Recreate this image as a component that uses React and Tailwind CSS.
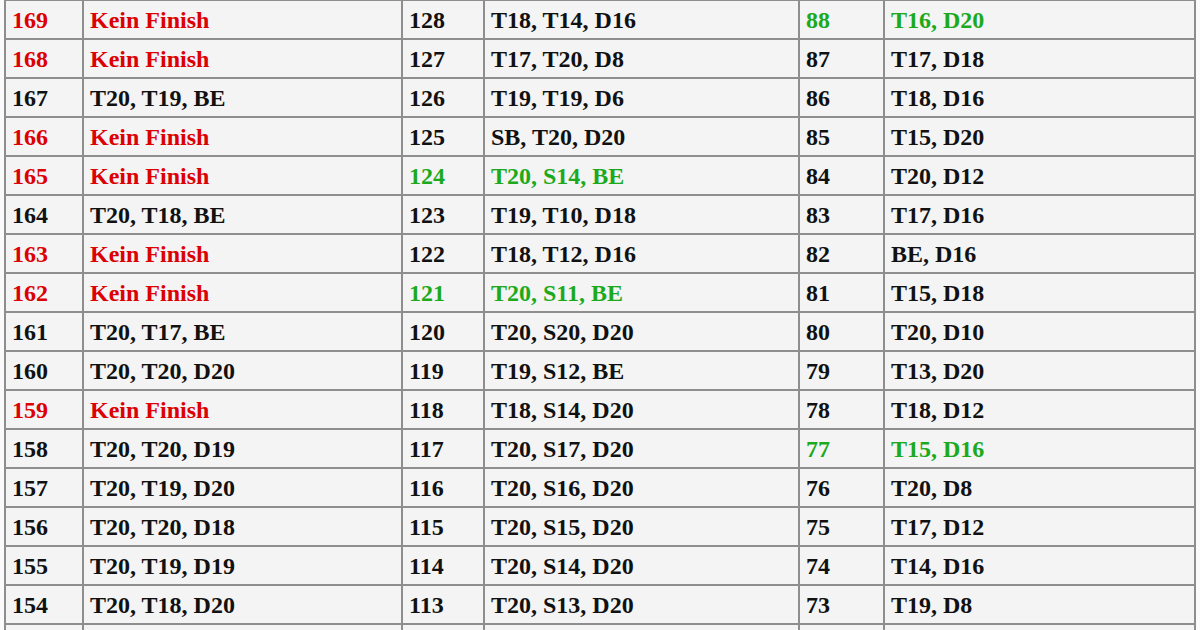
import React from "react";

const R = "r", G = "g";
const rows = [
  [["169", "Kein Finish", R], ["128", "T18, T14, D16"], ["88", "T16, D20", G]],
  [["168", "Kein Finish", R], ["127", "T17, T20, D8"], ["87", "T17, D18"]],
  [["167", "T20, T19, BE"], ["126", "T19, T19, D6"], ["86", "T18, D16"]],
  [["166", "Kein Finish", R], ["125", "SB, T20, D20"], ["85", "T15, D20"]],
  [["165", "Kein Finish", R], ["124", "T20, S14, BE", G], ["84", "T20, D12"]],
  [["164", "T20, T18, BE"], ["123", "T19, T10, D18"], ["83", "T17, D16"]],
  [["163", "Kein Finish", R], ["122", "T18, T12, D16"], ["82", "BE, D16"]],
  [["162", "Kein Finish", R], ["121", "T20, S11, BE", G], ["81", "T15, D18"]],
  [["161", "T20, T17, BE"], ["120", "T20, S20, D20"], ["80", "T20, D10"]],
  [["160", "T20, T20, D20"], ["119", "T19, S12, BE"], ["79", "T13, D20"]],
  [["159", "Kein Finish", R], ["118", "T18, S14, D20"], ["78", "T18, D12"]],
  [["158", "T20, T20, D19"], ["117", "T20, S17, D20"], ["77", "T15, D16", G]],
  [["157", "T20, T19, D20"], ["116", "T20, S16, D20"], ["76", "T20, D8"]],
  [["156", "T20, T20, D18"], ["115", "T20, S15, D20"], ["75", "T17, D12"]],
  [["155", "T20, T19, D19"], ["114", "T20, S14, D20"], ["74", "T14, D16"]],
  [["154", "T20, T18, D20"], ["113", "T20, S13, D20"], ["73", "T19, D8"]],
  [["", ""], ["", ""], ["", ""]],
];

const colorClass = (c) =>
  c === R ? "text-[#dc0000]" : c === G ? "text-[#1caa1c]" : "text-[#111111]";

function Cell({ children, c }) {
  return (
    <div
      className={`h-[39px] flex items-center pl-[6px] border-r-2 border-b-2 border-[#8e8e8e] bg-[#f4f4f4] overflow-hidden whitespace-nowrap ${colorClass(c)}`}
    >
      {children}
    </div>
  );
}

export default function App() {
  return (
    <div className="w-[1200px] h-[630px] overflow-hidden bg-[#fbfbfb]">
      <div
        className="ml-[4px] mt-[-1px] w-[1192px] grid grid-cols-[78px_319px_82px_315px_85px_311px] border-l-2 border-t-2 border-[#8e8e8e] font-bold text-[24px] leading-none"
        style={{ fontFamily: '"Liberation Serif", "Times New Roman", serif' }}
      >
        {rows.map((row, i) =>
          row.map(([n, t, c], j) => (
            <React.Fragment key={`${i}-${j}`}>
              <Cell c={c}>{n}</Cell>
              <Cell c={c}>{t}</Cell>
            </React.Fragment>
          ))
        )}
      </div>
    </div>
  );
}
